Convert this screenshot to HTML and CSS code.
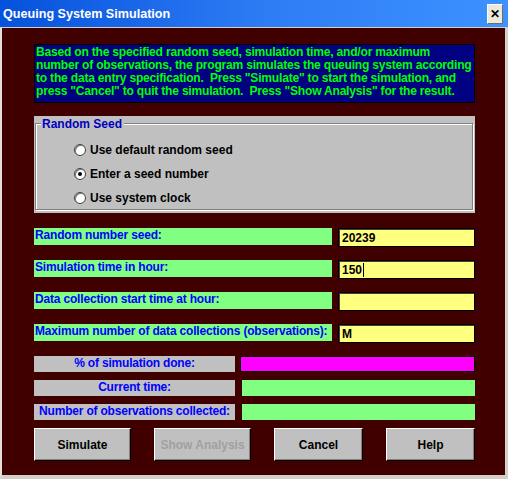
FILE: index.html
```html
<!DOCTYPE html>
<html lang="en">
<head>
<meta charset="UTF-8">
<title>Queuing System Simulation</title>
<link rel="stylesheet" href="styles.css">
</head>
<body>
<div class="window">
    <div class="titlebar">
        <span class="title">Queuing System Simulation</span>
        <span class="close">&#x2715;</span>
    </div>
    <div class="client">
        <div class="info">Based on the specified random seed, simulation time, and/or maximum<br>number of observations, the program simulates the queuing system according<br>to the data entry specification.&nbsp; Press "Simulate" to start the simulation, and<br>press "Cancel" to quit the simulation.&nbsp; Press "Show Analysis" for the result.</div>

        <div class="group">
            <div class="group-frame">
                <span class="group-title">Random Seed</span>
                <label class="radio"><span class="dot"></span>Use default random seed</label>
                <label class="radio"><span class="dot checked"></span>Enter a seed number</label>
                <label class="radio"><span class="dot"></span>Use system clock</label>
            </div>
        </div>

        <div class="fields">
            <div class="field"><div class="field-label">Random number seed:</div><div class="field-input">20239</div></div>
            <div class="field"><div class="field-label">Simulation time in hour:</div><div class="field-input">150<span class="caret"></span></div></div>
            <div class="field"><div class="field-label">Data collection start time at hour:</div><div class="field-input"></div></div>
            <div class="field"><div class="field-label">Maximum number of data collections (observations):</div><div class="field-input">M</div></div>
        </div>

        <div class="status">
            <div class="stat"><div class="stat-label">% of simulation done:</div><div class="stat-value progress"></div></div>
            <div class="stat"><div class="stat-label">Current time:</div><div class="stat-value"></div></div>
            <div class="stat"><div class="stat-label">Number of observations collected:</div><div class="stat-value"></div></div>
        </div>

        <div class="buttons">
            <button class="btn">Simulate</button>
            <button class="btn" disabled>Show Analysis</button>
            <button class="btn btn-narrow">Cancel</button>
            <button class="btn btn-narrow">Help</button>
        </div>
    </div>
</div>
</body>
</html>
```

FILE: styles.css
```css
body {
    margin: 0;
    background: #ffffff;
    font-family: 'Liberation Sans', Arial, sans-serif;
}
.window {
    width: 508px;
    height: 479px;
    box-sizing: border-box;
    background: #d4d0c8;
    border-left: 2px solid #e4e0d8;
    border-right: 3px solid #d4d0c8;
    border-bottom: 4px solid #d4d0c8;
    display: flex;
    flex-direction: column;
}
.titlebar {
    height: 27px;
    margin-left: -2px;
    margin-right: -3px;
    padding: 0 5px 0 3px;
    background: linear-gradient(to right, #0552dc, #2c7bf4 50%, #3d92ff);
    border-bottom: 1px solid #d4d0c8;
    display: flex;
    align-items: center;
    justify-content: space-between;
}
.title {
    color: #ffffff;
    font-weight: bold;
    font-size: 12.6px;
}
.close {
    width: 16px;
    height: 20px;
    box-sizing: border-box;
    background: #ece9d8;
    border: 1px solid #ffffff;
    border-right-color: #716f64;
    border-bottom-color: #716f64;
    font-size: 12px;
    font-weight: bold;
    line-height: 18px;
    text-align: center;
    color: #000000;
}
.client {
    flex: 1;
    background: #400000;
    padding: 16px 0 0 32px;
    font-weight: bold;
    font-size: 12px;
}
.info {
    width: 441px;
    height: 59px;
    box-sizing: border-box;
    background: #000080;
    border: 1px solid #000000;
    color: #00ff00;
    padding: 1px 0 0 1px;
    line-height: 13px;
    letter-spacing: -0.18px;
    white-space: nowrap;
}
.group {
    margin-top: 13px;
    width: 441px;
    height: 97px;
    box-sizing: border-box;
    background: #c0c0c0;
    padding: 7px 2px 3px 1px;
}
.group-frame {
    position: relative;
    height: 100%;
    box-sizing: border-box;
    border: 1px solid #808080;
    box-shadow: 1px 1px 0 #ffffff, inset 1px 1px 0 #ffffff;
    padding: 19px 0 0 38px;
    display: flex;
    flex-direction: column;
    gap: 10px;
}
.group-title {
    position: absolute;
    left: 5px;
    top: -7px;
    padding: 0 2px 0 1px;
    background: #c0c0c0;
    color: #0000c0;
}
.radio {
    display: flex;
    align-items: center;
    height: 14px;
    color: #000000;
}
.dot {
    width: 12px;
    height: 12px;
    box-sizing: border-box;
    border-radius: 50%;
    background: #ffffff;
    border: 1px solid #404040;
    box-shadow: inset 1px 1px 0 #808080;
    margin-right: 4px;
    display: flex;
    align-items: center;
    justify-content: center;
}
.dot.checked::after {
    content: "";
    width: 4px;
    height: 4px;
    border-radius: 50%;
    background: #000000;
}
.fields {
    margin-top: 15px;
    width: 441px;
    display: flex;
    flex-direction: column;
    gap: 15px;
}
.field {
    display: flex;
    justify-content: space-between;
    height: 17px;
}
.field-label {
    width: 297px;
    background: #80ff80;
    color: #0000ff;
    line-height: 14px;
    padding-left: 1px;
    letter-spacing: -0.18px;
    white-space: nowrap;
}
.field-input {
    width: 137px;
    height: 19px;
    box-sizing: border-box;
    background: #ffff80;
    border: 1px solid #000000;
    box-shadow: inset 1px 1px 0 #404040;
    color: #000000;
    padding: 2px 0 0 3px;
    display: flex;
    align-items: flex-start;
}
.caret {
    width: 1px;
    height: 14px;
    background: #000000;
    margin-left: 1px;
}
.status {
    margin-top: 15px;
    width: 441px;
    display: flex;
    flex-direction: column;
    gap: 8px;
}
.stat {
    display: flex;
    justify-content: space-between;
    height: 16px;
}
.stat-label {
    width: 201px;
    background: #c0c0c0;
    color: #0000ff;
    text-align: center;
    line-height: 14px;
    letter-spacing: -0.2px;
    white-space: nowrap;
}
.stat-value {
    width: 233px;
    background: #80ff80;
}
.stat-value.progress {
    background: #ff00ff;
    border: 1px solid #000000;
}
.buttons {
    margin-top: 8px;
    width: 441px;
    display: flex;
    justify-content: space-between;
}
.btn {
    width: 97px;
    height: 33px;
    background: #c0c0c0;
    border: 1px solid #ffffff;
    border-right-color: #000000;
    border-bottom-color: #000000;
    box-shadow: inset -1px -1px 0 #808080;
    font-family: 'Liberation Sans', Arial, sans-serif;
    font-weight: bold;
    font-size: 12px;
    color: #000000;
    padding: 0;
}
.btn-narrow {
    width: 89px;
}
.btn:disabled {
    color: #a0a0a0;
}
```
